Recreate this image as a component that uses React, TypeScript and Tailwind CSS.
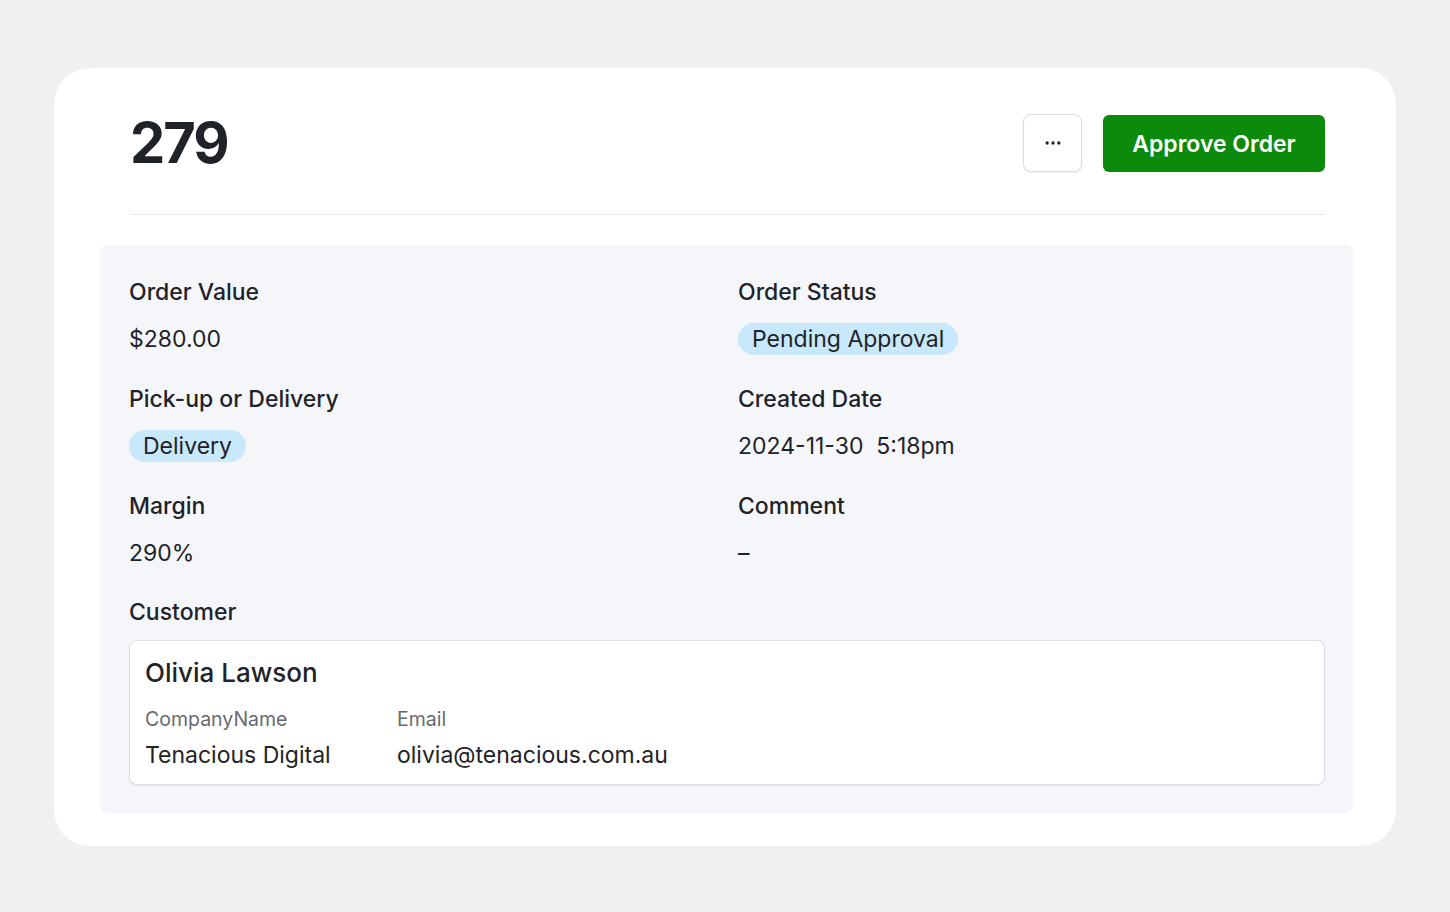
import { MoreHorizontal } from "lucide-react";

type Field = {
  label: string;
  value: string;
  badge?: boolean;
};

const fields: Field[] = [
  { label: "Order Value", value: "$280.00" },
  { label: "Order Status", value: "Pending Approval", badge: true },
  { label: "Pick-up or Delivery", value: "Delivery", badge: true },
  { label: "Created Date", value: "2024-11-30\u00a0\u00a05:18pm" },
  { label: "Margin", value: "290%" },
  { label: "Comment", value: "\u2013" },
];

function Badge({ children }: { children: React.ReactNode }) {
  return (
    <span className="inline-flex h-8 items-center rounded-full bg-[#c8e8fb] px-[14px] text-[23px] leading-8 text-[#1f2328]">
      {children}
    </span>
  );
}

function DetailField({ field }: { field: Field }) {
  return (
    <div className="flex flex-col gap-4">
      <div className="text-[23px] font-medium leading-[30px] text-[#1f2328]">{field.label}</div>
      <div className="flex h-8 items-center">
        {field.badge ? (
          <Badge>{field.value}</Badge>
        ) : (
          <span className="text-[23px] leading-8 text-[#1f2328]">{field.value}</span>
        )}
      </div>
    </div>
  );
}

function CustomerCard() {
  return (
    <div className="rounded-lg border border-[#dcdde0] bg-white px-[15px] pt-4 pb-[14px] shadow-[0_1px_2px_rgba(0,0,0,0.06)]">
      <div className="text-[26px] font-medium leading-8 text-[#1f2328]">Olivia Lawson</div>
      <div className="mt-[18px] flex">
        <div className="w-[252px]">
          <div className="text-[19.5px] leading-6 text-[#666a70]">CompanyName</div>
          <div className="mt-[9px] text-[23px] leading-[30px] text-[#1f2328]">Tenacious Digital</div>
        </div>
        <div>
          <div className="text-[19.5px] leading-6 text-[#666a70]">Email</div>
          <div className="mt-[9px] text-[23px] leading-[30px] text-[#1f2328]">olivia@tenacious.com.au</div>
        </div>
      </div>
    </div>
  );
}

export default function App() {
  return (
    <div
      className="min-h-[912px] bg-[#f0f0f0] pt-[68px] pl-[54px]"
      style={{ fontFamily: "Inter, 'Noto Sans', sans-serif" }}
    >
      <div className="w-[1342px] rounded-[36px] bg-white pt-[46px] pr-[43px] pb-[33px] pl-[46px]">
        {/* header with order number and actions */}
        <div className="mr-[28px] ml-[30px] flex h-[101px] items-start justify-between border-b border-[#e8e9ec]">
          <div className="flex h-[58px] items-center">
            <h1 className="text-[56px] font-bold leading-none tracking-[-0.035em] text-[#1f2328]">279</h1>
          </div>
          <div className="flex items-center gap-[21px]">
            <button className="flex h-[58px] w-[59px] items-center justify-center rounded-lg border border-[#dcdde0] bg-white text-[#1f2328] shadow-[0_1px_2px_rgba(0,0,0,0.08)]">
              <MoreHorizontal className="h-5 w-5" strokeWidth={2} />
            </button>
            <button className="flex h-[57px] w-[222px] items-center justify-center rounded-md bg-[#0b8a0b] pt-[2px] text-[23px] font-semibold text-white">
              Approve Order
            </button>
          </div>
        </div>

        {/* details panel */}
        <div className="mt-[30px] rounded-lg bg-[#f5f6fa] pt-8 pr-[28px] pb-[28px] pl-[29px]">
          <div className="grid grid-cols-2 gap-x-[22px] gap-y-[29px]">
            {fields.map((f) => (
              <DetailField key={f.label} field={f} />
            ))}
          </div>
          <div className="mt-7 text-[23px] font-medium leading-[30px] text-[#1f2328]">Customer</div>
          <div className="mt-[13px]">
            <CustomerCard />
          </div>
        </div>
      </div>
    </div>
  );
}
